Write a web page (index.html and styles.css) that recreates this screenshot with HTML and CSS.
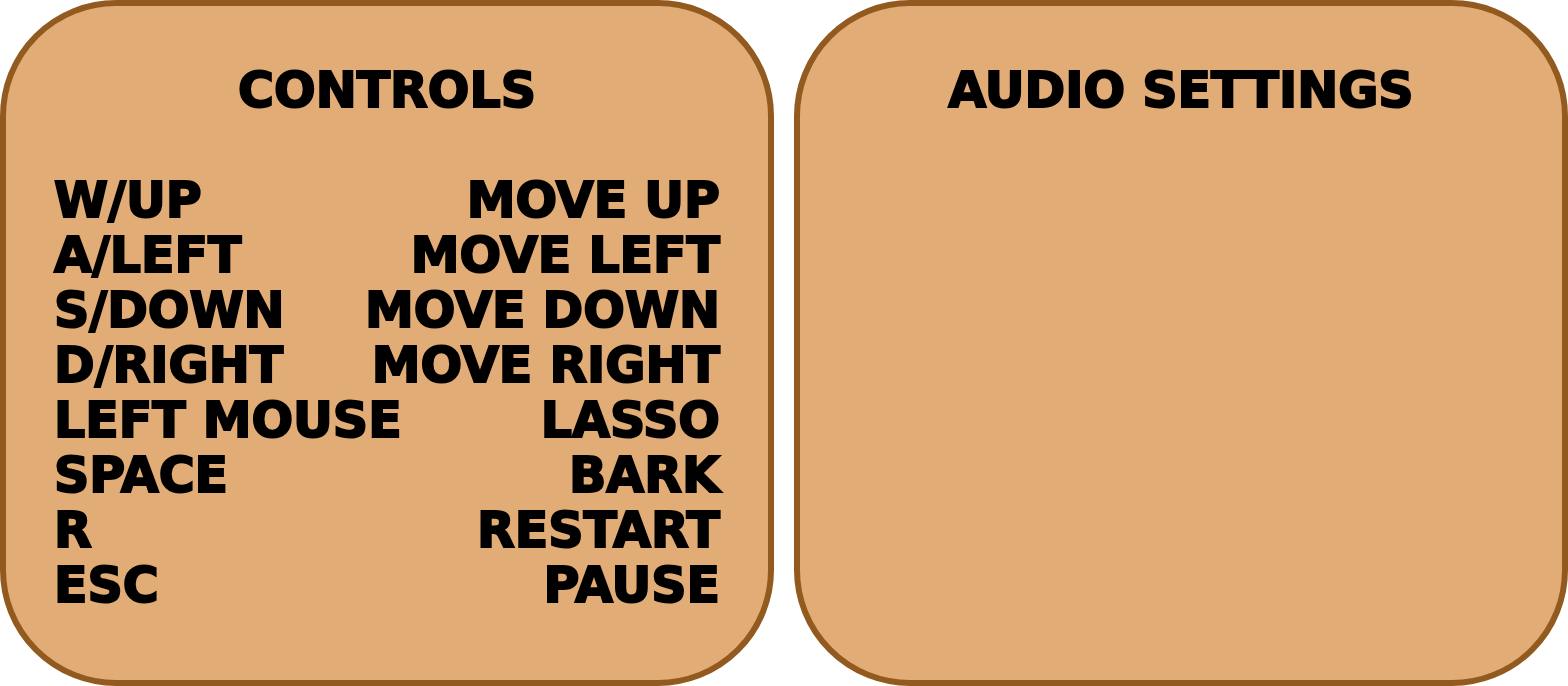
FILE: index.html
```html
<!DOCTYPE html>
<html lang="en">
<head>
<meta charset="utf-8">
<title>Controls and audio settings</title>
<link rel="stylesheet" href="styles.css">
</head>
<body>
<main class="panels">
  <section class="panel">
    <h2 class="title">CONTROLS</h2>
    <dl class="bindings">
      <div class="binding"><dt>W/UP</dt><dd>MOVE UP</dd></div>
      <div class="binding"><dt>A/LEFT</dt><dd>MOVE LEFT</dd></div>
      <div class="binding"><dt>S/DOWN</dt><dd>MOVE DOWN</dd></div>
      <div class="binding"><dt>D/RIGHT</dt><dd>MOVE RIGHT</dd></div>
      <div class="binding"><dt>LEFT MOUSE</dt><dd>LASSO</dd></div>
      <div class="binding"><dt>SPACE</dt><dd>BARK</dd></div>
      <div class="binding"><dt>R</dt><dd>RESTART</dd></div>
      <div class="binding"><dt>ESC</dt><dd>PAUSE</dd></div>
    </dl>
  </section>
  <section class="panel">
    <h2 class="title">AUDIO SETTINGS</h2>
  </section>
</main>
</body>
</html>
```
FILE: styles.css
```css
* {
  box-sizing: border-box;
}

body {
  margin: 0;
  background: #fff;
  color: #000;
  font-family: "DejaVu Sans", Inter, sans-serif;
  font-weight: 900;
  -webkit-text-stroke: 2px #000;
}

.panels {
  display: grid;
  grid-template-columns: 1fr 1fr;
  gap: 20px;
  min-height: 100vh;
}

.panel {
  padding: 57px 48px 65px;
  border: 6px solid #935a20;
  border-radius: 116px;
  background: #e2ac76;
}

.title {
  margin: 0 0 55px;
  font-size: 49px;
  font-weight: 900;
  line-height: 55px;
  text-align: center;
}

.bindings {
  margin: 0;
  font-size: 49px;
  line-height: 55px;
}

.binding {
  display: flex;
  justify-content: space-between;
  white-space: nowrap;
}

.binding dd {
  margin: 0;
}
```
